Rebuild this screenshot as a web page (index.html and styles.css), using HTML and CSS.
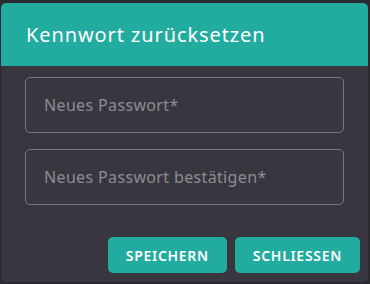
FILE: index.html
```html
<!DOCTYPE html>
<html lang="de">
<head>
    <meta charset="UTF-8">
    <meta name="viewport" content="width=device-width, initial-scale=1.0">
    <title>Kennwort zurücksetzen</title>
    <link rel="stylesheet" href="styles.css">
</head>
<body>
    <div class="dialog">
        <div class="dialog-header">Kennwort zurücksetzen</div>
        <div class="dialog-body">
            <input class="field" type="password" placeholder="Neues Passwort*">
            <input class="field" type="password" placeholder="Neues Passwort bestätigen*">
        </div>
        <div class="dialog-actions">
            <button class="btn">Speichern</button>
            <button class="btn">Schliessen</button>
        </div>
    </div>
</body>
</html>
```

FILE: styles.css
```css
html, body { height: 100%; }
body {
    margin: 0;
    padding: 3px 2px 2px 1px;
    box-sizing: border-box;
    background: #2a2a30;
    font-family: "Noto Sans", "Open Sans", sans-serif;
}
.dialog {
    height: 100%;
    background: #38373f;
    border-radius: 5px;
    overflow: hidden;
    display: flex;
    flex-direction: column;
}
.dialog-header {
    background: #22ab9f;
    color: #fff;
    font-size: 20px;
    height: 63px;
    padding: 0 25px;
    display: flex;
    align-items: center;
    box-sizing: border-box;
    letter-spacing: 0.9px;
}
.dialog-body {
    padding: 11px 24px 0;
    display: flex;
    flex-direction: column;
    gap: 16px;
}
.field {
    height: 56px;
    box-sizing: border-box;
    background: transparent;
    border: 1px solid #77767c;
    border-radius: 5px;
    padding: 0 18px;
    font-family: inherit;
    font-size: 16px;
    letter-spacing: 0.35px;
    color: #ddd;
    outline: none;
}
.field::placeholder { color: #8d8c92; }
.dialog-actions {
    display: flex;
    justify-content: flex-end;
    gap: 8px;
    padding: 32px 8px 0;
}
.btn {
    height: 36px;
    padding: 0 18px;
    border: none;
    border-radius: 5px;
    background: #22ab9f;
    color: #fff;
    font-family: inherit;
    font-weight: 600;
    font-size: 14px;
    text-transform: uppercase;
    letter-spacing: 0.7px;
    cursor: pointer;
}
```
